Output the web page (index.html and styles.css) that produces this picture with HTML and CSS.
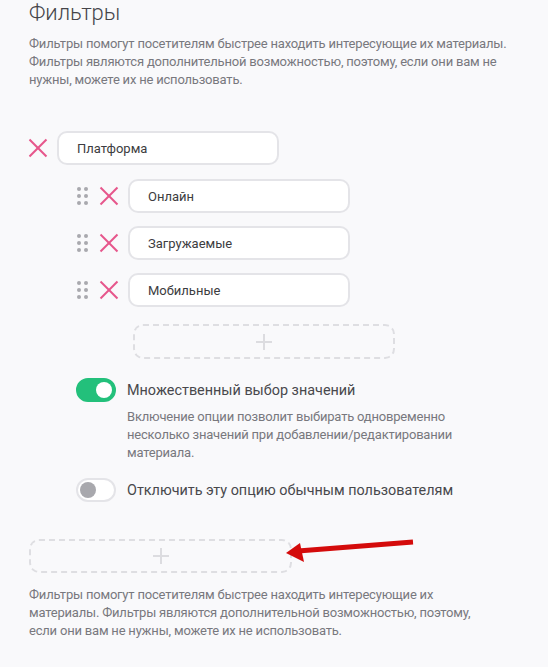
FILE: index.html
```html
<!DOCTYPE html>
<html lang="ru">

<head>
    <meta charset="UTF-8">
    <meta name="viewport" content="width=device-width, initial-scale=1.0">
    <title>Фильтры</title>
    <link rel="stylesheet" href="styles.css">
</head>

<body>
    <div class="filters-page">
        <h1>Фильтры</h1>
        <p class="hint">Фильтры помогут посетителям быстрее находить интересующие их материалы.
            Фильтры являются дополнительной возможностью, поэтому, если они вам не нужны, можете их не использовать.</p>

        <div class="filter">
            <div class="row">
                <span class="remove"></span>
                <input class="field" type="text" value="Платформа">
            </div>

            <div class="values">
                <div class="row">
                    <span class="handle"><i></i><i></i><i></i><i></i><i></i><i></i></span>
                    <span class="remove"></span>
                    <input class="field" type="text" value="Онлайн">
                </div>
                <div class="row">
                    <span class="handle"><i></i><i></i><i></i><i></i><i></i><i></i></span>
                    <span class="remove"></span>
                    <input class="field" type="text" value="Загружаемые">
                </div>
                <div class="row">
                    <span class="handle"><i></i><i></i><i></i><i></i><i></i><i></i></span>
                    <span class="remove"></span>
                    <input class="field" type="text" value="Мобильные">
                </div>
                <button class="add add-value" type="button"></button>
            </div>

            <div class="option">
                <span class="switch on"></span>
                <span class="option-label">Множественный выбор значений</span>
            </div>
            <p class="option-hint">Включение опции позволит выбирать одновременно несколько значений при добавлении/редактировании материала.</p>

            <div class="option">
                <span class="switch"></span>
                <span class="option-label">Отключить эту опцию обычным пользователям</span>
            </div>
        </div>

        <button class="add add-filter" type="button"></button>
        <p class="hint hint-bottom">Фильтры помогут посетителям быстрее находить интересующие их материалы. Фильтры являются дополнительной возможностью, поэтому, если они вам не нужны, можете их не использовать.</p>

        <svg class="arrow" width="140" height="30" viewBox="280 535 140 30">
            <line x1="413" y1="542" x2="298" y2="551" stroke="#d40b0b" stroke-width="5" />
            <polygon points="286,553 300,543 304,562" fill="#d40b0b" />
        </svg>
    </div>
</body>

</html>
```

FILE: styles.css
```css
* {
    margin: 0;
    padding: 0;
    box-sizing: border-box;
    font-family: 'Roboto', sans-serif;
}

body {
    background-color: #f9f9fb;
    color: #444;
}

.filters-page {
    position: relative;
    width: 548px;
    padding: 0 29px;
}

h1 {
    font-size: 22px;
    font-weight: 300;
    line-height: 25px;
    color: #45454a;
}

.hint {
    margin-top: 10px;
    font-size: 13px;
    line-height: 18px;
    letter-spacing: -0.2px;
    color: #78787e;
}

.filter {
    margin-top: 42px;
}

.row {
    display: flex;
    align-items: center;
    height: 34px;
}

.remove {
    position: relative;
    width: 18px;
    height: 18px;
    margin-right: 10px;
}

.remove::before,
.remove::after {
    content: '';
    position: absolute;
    left: -3px;
    top: 8px;
    width: 24px;
    height: 2px;
    background-color: #e6568b;
    transform: rotate(45deg);
}

.remove::after {
    transform: rotate(-45deg);
}

.field {
    width: 222px;
    height: 34px;
    padding: 0 18px;
    border: 2px solid #e4e4e8;
    border-radius: 10px;
    background-color: #fff;
    font-family: 'Roboto', sans-serif;
    font-size: 13px;
    color: #3c3c40;
    outline: none;
}

.values {
    margin-left: 47px;
}

.values .row {
    margin-top: 13px;
}

.values .row:first-child {
    margin-top: 14px;
}

.handle {
    display: grid;
    grid-template-columns: 4px 4px;
    gap: 3px;
    margin: 0 12px 0 1px;
}

.handle i {
    width: 4px;
    height: 4px;
    border-radius: 50%;
    background-color: #a9a9ae;
}

.add {
    display: block;
    position: relative;
    height: 35px;
    border: 2px dashed #dedee2;
    border-radius: 10px;
    background: none;
    cursor: pointer;
}

.add::before,
.add::after {
    content: '';
    position: absolute;
    left: 50%;
    top: 50%;
    background-color: #dcdce0;
}

.add::before {
    width: 16px;
    height: 2px;
    margin: -1px 0 0 -8px;
}

.add::after {
    width: 2px;
    height: 16px;
    margin: -8px 0 0 -1px;
}

.add-value {
    width: 262px;
    margin: 17px 0 0 57px;
}

.option {
    display: flex;
    align-items: center;
    margin: 19px 0 0 47px;
}

.switch {
    position: relative;
    width: 40px;
    height: 24px;
    border: 2px solid #e4e4e8;
    border-radius: 12px;
    background-color: #fff;
    margin-right: 11px;
    flex-shrink: 0;
}

.switch::after {
    content: '';
    position: absolute;
    left: 2px;
    top: 2px;
    width: 16px;
    height: 16px;
    border-radius: 50%;
    background-color: #a8a8ad;
}

.switch.on {
    border-color: #23c07b;
    background-color: #23c07b;
}

.switch.on::after {
    left: 18px;
    background-color: #fff;
}

.option-label {
    font-size: 14.4px;
    color: #48484c;
}

.option-hint {
    margin: 6px 0 0 98px;
    width: 360px;
    font-size: 13px;
    line-height: 18px;
    letter-spacing: -0.2px;
    color: #78787e;
}

.option-hint + .option {
    margin-top: 16px;
}

.add-filter {
    width: 263px;
    height: 34px;
    margin-top: 37px;
}

.hint-bottom {
    width: 450px;
    margin-top: 13px;
}

.arrow {
    position: absolute;
    left: 280px;
    top: 535px;
}
```
